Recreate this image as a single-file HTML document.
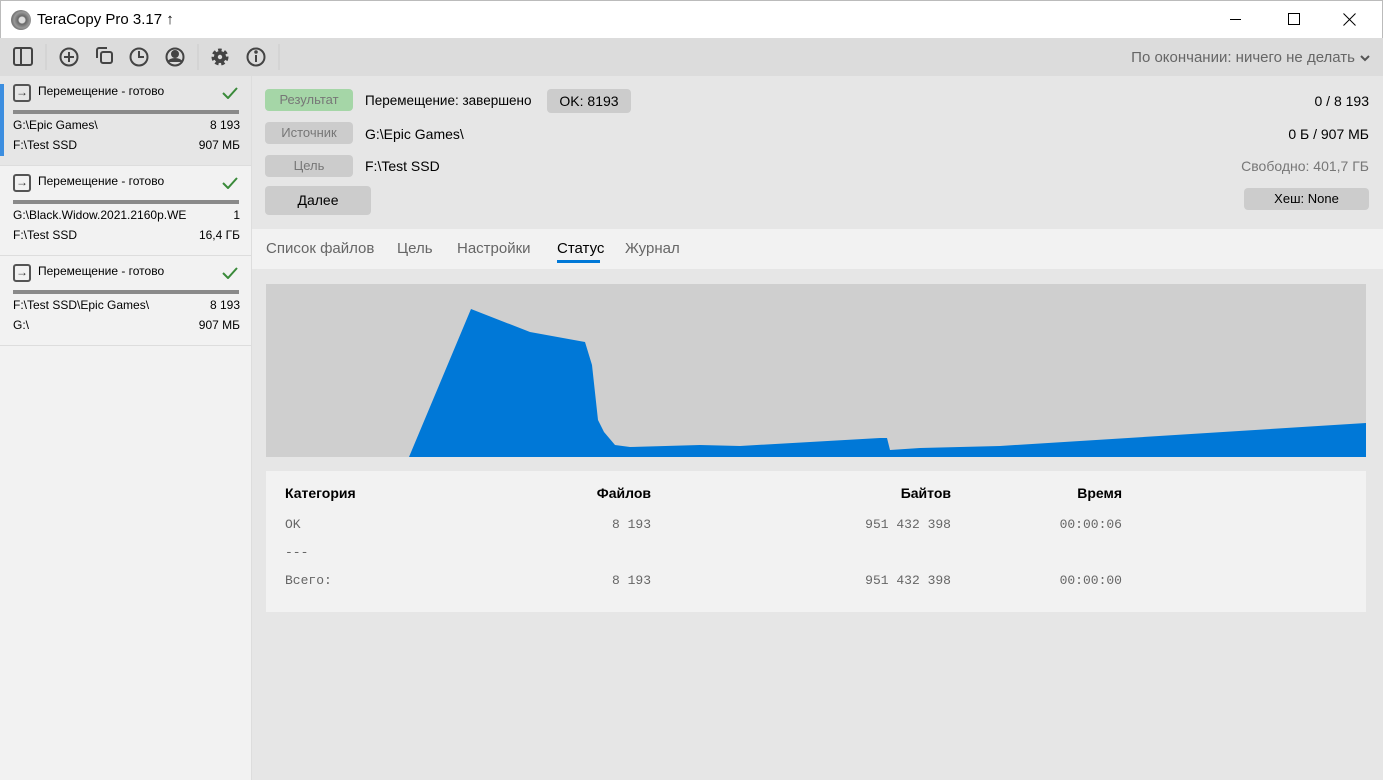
<!DOCTYPE html>
<html><head><meta charset="utf-8"><style>
*{margin:0;padding:0;box-sizing:border-box}
body{width:1383px;height:780px;overflow:hidden;font-family:"Segoe UI","Liberation Sans","Noto Sans CJK SC",sans-serif;background:#e6e6e6;position:relative;color:#000}
.abs{position:absolute}
.title{left:0;top:0;width:1383px;height:38px;background:#fff;border:1px solid #bbb;border-bottom:none}
.toolbar{left:0;top:38px;width:1383px;height:38px;background:#dcdcdc}
.side{left:0;top:76px;width:252px;height:704px;background:#f2f2f2;border-right:1px solid #ddd}
.item{position:absolute;left:0;width:251px;height:90px;border-bottom:1px solid #ddd;font-size:12px}
.item .hd{position:absolute;left:38px;top:8px}
.item .ic{position:absolute;left:13px;top:8px;width:18px;height:18px;border:2px solid #555;border-radius:3px;font-size:12px;line-height:13px;text-align:center;font-weight:bold;color:#333}
.item .bar{position:absolute;left:13px;top:34px;width:226px;height:4px;background:#8a8a8a}
.item .l1{position:absolute;left:13px;top:42px}
.item .l2{position:absolute;left:13px;top:62px}
.item .r1{position:absolute;right:11px;top:42px}
.item .r2{position:absolute;right:11px;top:62px}
.chk{position:absolute;left:222px;top:11px}
.pill{position:absolute;height:22px;border-radius:4px;background:#ccc;color:#777;font-size:13px;text-align:center;line-height:22px}
.t{position:absolute;font-size:14px}
.tabs{left:252px;top:229px;width:1131px;height:40px;background:#f2f2f2}
.tab{position:absolute;top:11px;font-size:15px;color:#666}
.tbl{left:266px;top:471px;width:1100px;height:141px;background:#f2f2f2}
.tbl .h{position:absolute;top:14px;font-weight:bold;font-size:14px}
.tbl .m{position:absolute;font-family:"Liberation Mono",monospace;font-size:13px;color:#666}
</style></head><body>
<div class="abs title">
 <div class="abs" style="left:10px;top:9px;width:20px;height:20px;border-radius:50%;background:radial-gradient(circle at 55% 50%,#ddd 0 3px,#666 4px,#999 8px,#777 10px)"></div>
 <div class="abs" style="left:36px;top:10px;font-size:15px">TeraCopy Pro 3.17 ↑</div>
 <div class="abs" style="left:1229px;top:18px;width:11px;height:1px;background:#000"></div>
 <div class="abs" style="left:1287px;top:12px;width:12px;height:12px;border:1px solid #000"></div>
 <svg class="abs" style="left:1342px;top:12px" width="13" height="13"><path d="M0.5 0.5l12 12M12.5 0.5l-12 12" stroke="#000" stroke-width="1"/></svg>
</div>
<div class="abs toolbar">
 <svg class="abs" style="left:0;top:0" width="290" height="38" fill="none" stroke="#444" stroke-width="2">
  <rect x="14" y="10" width="18" height="17" rx="2"/><line x1="21" y1="10" x2="21" y2="27"/>
  <line x1="46" y1="6" x2="46" y2="32" stroke="#ccc" stroke-width="1"/>
  <circle cx="69" cy="19" r="8.5"/><line x1="69" y1="14" x2="69" y2="24"/><line x1="64" y1="19" x2="74" y2="19"/>
  <rect x="101" y="14" width="11" height="11" rx="2"/><path d="M97 20V12a2 2 0 0 1 2-2h8"/>
  <circle cx="139" cy="19" r="8.5"/><path d="M139 13v6h5"/>
  <circle cx="175" cy="19" r="8.5"/><circle cx="175" cy="16" r="3" fill="#444"/><path d="M168 24c3-4 11-4 14 0" fill="#444"/>
  <line x1="198" y1="6" x2="198" y2="32" stroke="#ccc" stroke-width="1"/>
  <circle cx="220" cy="19" r="6" stroke-width="5" stroke-dasharray="3 2.3"/><circle cx="220" cy="19" r="5" fill="#444"/><circle cx="220" cy="19" r="2.2" fill="#dcdcdc" stroke="none"/>
  <circle cx="256" cy="19" r="8.5"/><line x1="256" y1="17" x2="256" y2="24"/><circle cx="256" cy="14" r="0.8" fill="#444"/>
  <line x1="279" y1="6" x2="279" y2="32" stroke="#ccc" stroke-width="1"/>
 </svg>
 <div class="abs" style="right:28px;top:11px;font-size:15px;color:#666">По окончании: ничего не делать</div>
 <svg class="abs" style="left:1359px;top:16px" width="12" height="8"><path d="M2 2l4 4 4-4" stroke="#555" stroke-width="2" fill="none"/></svg>
</div>
<div class="abs side">
 <div class="item" style="top:0;background:#e6e6e6"><div class="abs" style="left:0;top:8px;width:4px;height:72px;background:#3c8ee0"></div><div class="ic">→</div><div class="hd">Перемещение - готово</div><svg class="chk" width="16" height="12"><path d="M1 6l5 5 9-10" stroke="#3a8a3a" stroke-width="2" fill="none"/></svg><div class="bar"></div><div class="l1">G:\Epic Games\</div><div class="r1">8 193</div><div class="l2">F:\Test SSD</div><div class="r2">907 МБ</div></div>
 <div class="item" style="top:90px"><div class="ic">→</div><div class="hd">Перемещение - готово</div><svg class="chk" width="16" height="12"><path d="M1 6l5 5 9-10" stroke="#3a8a3a" stroke-width="2" fill="none"/></svg><div class="bar"></div><div class="l1">G:\Black.Widow.2021.2160p.WE</div><div class="r1">1</div><div class="l2">F:\Test SSD</div><div class="r2">16,4 ГБ</div></div>
 <div class="item" style="top:180px"><div class="ic">→</div><div class="hd">Перемещение - готово</div><svg class="chk" width="16" height="12"><path d="M1 6l5 5 9-10" stroke="#3a8a3a" stroke-width="2" fill="none"/></svg><div class="bar"></div><div class="l1">F:\Test SSD\Epic Games\</div><div class="r1">8 193</div><div class="l2">G:\</div><div class="r2">907 МБ</div></div>
</div>
<div class="pill" style="left:265px;top:89px;width:88px;background:#a5d6a7">Результат</div>
<div class="pill" style="left:265px;top:122px;width:88px">Источник</div>
<div class="pill" style="left:265px;top:155px;width:88px">Цель</div>
<div class="pill" style="left:265px;top:186px;width:106px;height:29px;line-height:29px;color:#000;font-size:14px">Далее</div>
<div class="pill" style="left:547px;top:89px;width:84px;height:24px;line-height:24px;color:#000;font-size:14px">OK: 8193</div>
<div class="pill" style="left:1244px;top:188px;width:125px;color:#000">Хеш: None</div>
<div class="t" style="left:365px;top:93px;font-size:13.5px">Перемещение: завершено</div>
<div class="t" style="left:365px;top:126px">G:\Epic Games\</div>
<div class="t" style="left:365px;top:158px">F:\Test SSD</div>
<div class="t" style="right:14px;top:93px">0 / 8 193</div>
<div class="t" style="right:14px;top:126px">0 Б / 907 МБ</div>
<div class="t" style="right:14px;top:158px;color:#777">Свободно: 401,7 ГБ</div>
<div class="abs tabs">
 <div class="tab" style="left:14px">Список файлов</div>
 <div class="tab" style="left:145px">Цель</div>
 <div class="tab" style="left:205px">Настройки</div>
 <div class="tab" style="left:305px;color:#000">Статус</div>
 <div class="abs" style="left:305px;top:31px;width:43px;height:3px;background:#0078d7"></div>
 <div class="tab" style="left:373px">Журнал</div>
</div>
<svg class="abs" style="left:266px;top:284px" width="1100" height="173">
 <rect width="1100" height="173" fill="#cfcfcf"/>
 <polygon fill="#0078d7" points="143,173 205,25 264,48 319,58 326,81 332,136 338,148 349,161 364,163 434,161 474,162 614,154 621,154 624,166 654,164 734,162 1100,139 1100,173"/>
</svg>
<div class="abs tbl">
 <div class="h" style="left:19px">Категория</div>
 <div class="h" style="right:715px">Файлов</div>
 <div class="h" style="right:415px">Байтов</div>
 <div class="h" style="right:244px">Время</div>
 <div class="m" style="left:19px;top:46px">OK</div><div class="m" style="right:715px;top:46px">8 193</div><div class="m" style="right:415px;top:46px">951 432 398</div><div class="m" style="right:244px;top:46px">00:00:06</div>
 <div class="m" style="left:19px;top:74px">---</div>
 <div class="m" style="left:19px;top:102px">Всего:</div><div class="m" style="right:715px;top:102px">8 193</div><div class="m" style="right:415px;top:102px">951 432 398</div><div class="m" style="right:244px;top:102px">00:00:00</div>
</div>
</body></html>
